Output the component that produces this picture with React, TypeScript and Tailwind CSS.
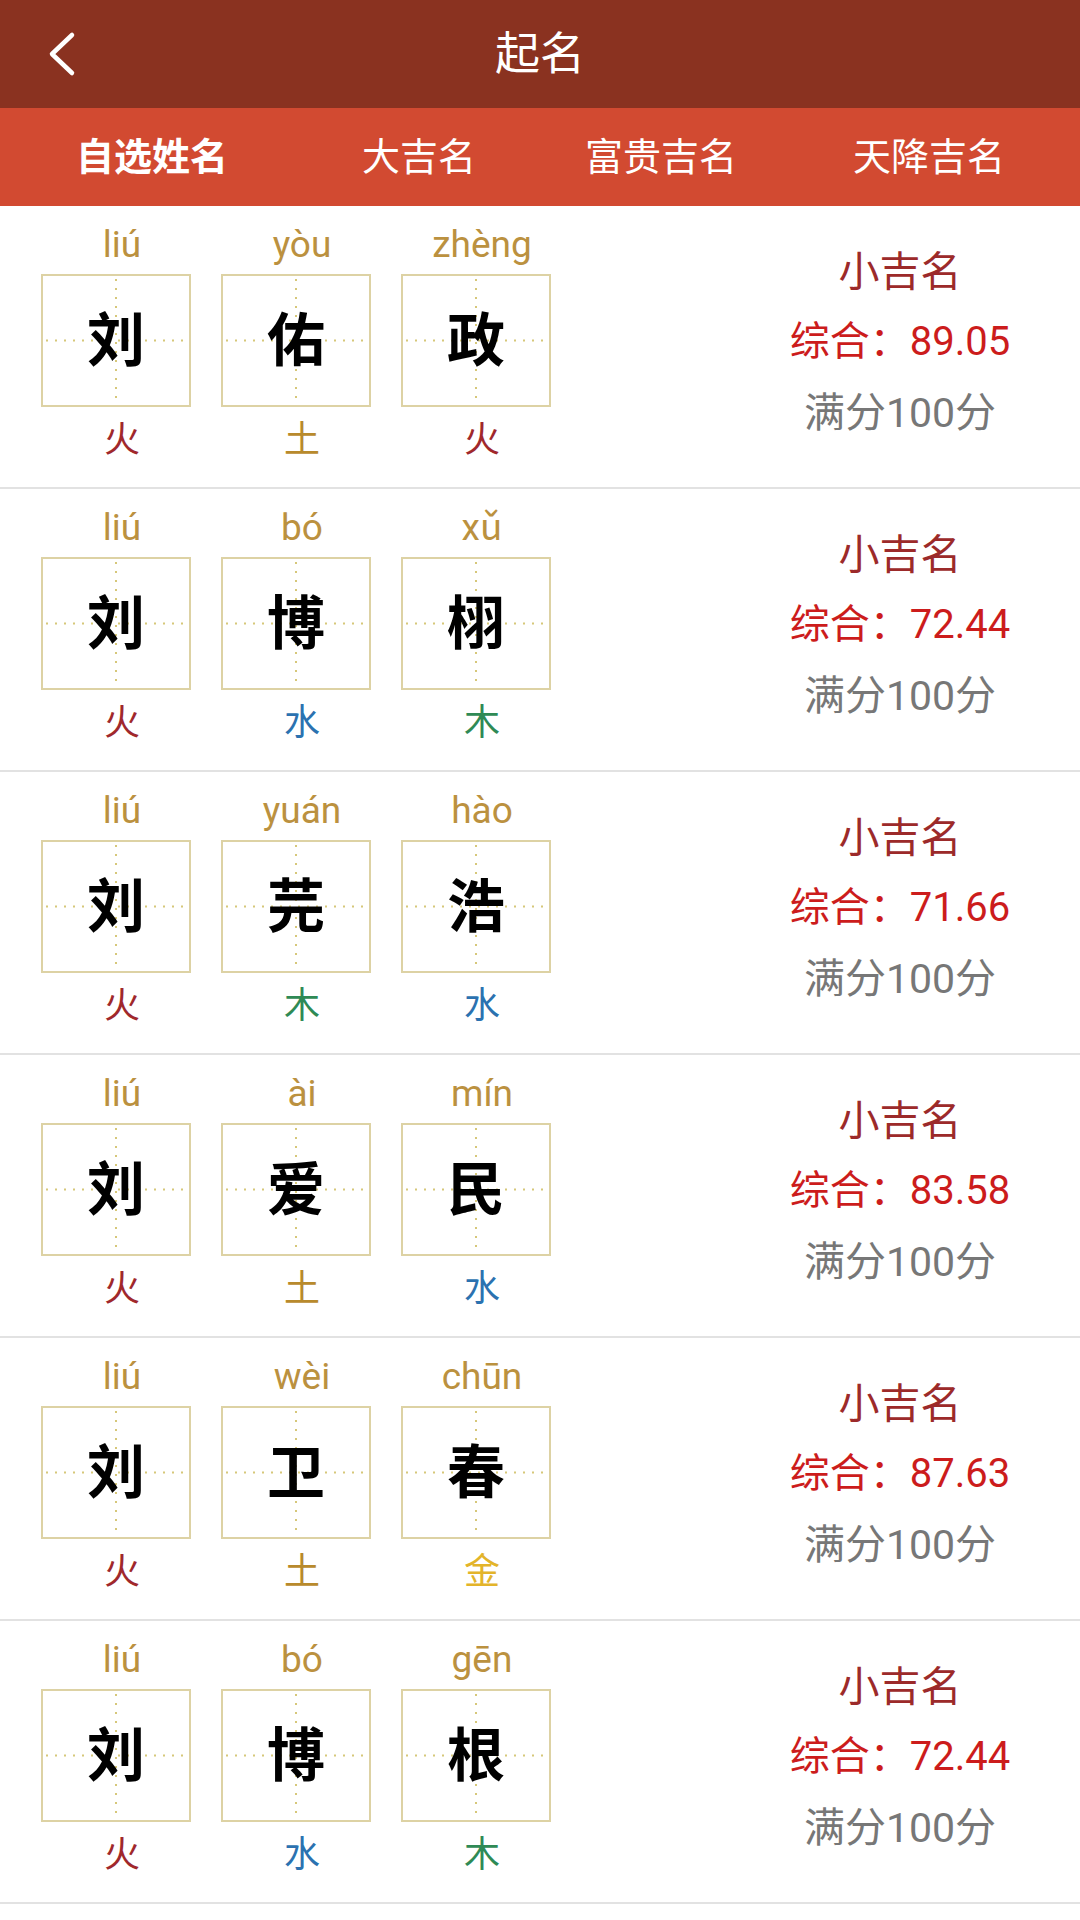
const tabs = [
  { label: '自选姓名', active: true, gap: 'ml-0' },
  { label: '大吉名', active: false, gap: 'ml-[134px]' },
  { label: '富贵吉名', active: false, gap: 'ml-[109px]' },
  { label: '天降吉名', active: false, gap: 'ml-[116px]' },
]

const elementColor: Record<string, string> = {
  火: 'text-[#a0282c]',
  土: 'text-[#b88a2c]',
  水: 'text-[#2b72b0]',
  木: 'text-[#2f8a55]',
  金: 'text-[#e3b42a]',
}

const names = [
  { chars: [['liú', '刘', '火'], ['yòu', '佑', '土'], ['zhèng', '政', '火']], score: '89.05' },
  { chars: [['liú', '刘', '火'], ['bó', '博', '水'], ['xǔ', '栩', '木']], score: '72.44' },
  { chars: [['liú', '刘', '火'], ['yuán', '芫', '木'], ['hào', '浩', '水']], score: '71.66' },
  { chars: [['liú', '刘', '火'], ['ài', '爱', '土'], ['mín', '民', '水']], score: '83.58' },
  { chars: [['liú', '刘', '火'], ['wèi', '卫', '土'], ['chūn', '春', '金']], score: '87.63' },
  { chars: [['liú', '刘', '火'], ['bó', '博', '水'], ['gēn', '根', '木']], score: '72.44' },
]

const font = { fontFamily: 'Roboto, "Noto Sans CJK SC", sans-serif' }

function GridLines() {
  return (
    <svg className="absolute inset-0" width="146" height="129" viewBox="0 0 146 129">
      <line x1="73" y1="3" x2="73" y2="126" stroke="#d6c779" strokeWidth="2" strokeDasharray="2 7" />
      <line x1="3" y1="64.5" x2="143" y2="64.5" stroke="#d6c779" strokeWidth="2" strokeDasharray="2 7" />
    </svg>
  )
}

function CharCell({ pinyin, hanzi, element }: { pinyin: string; hanzi: string; element: string }) {
  return (
    <div className="flex w-[150px] flex-col items-center">
      <div className="h-[68px] pl-[12px] pt-[16px] text-[37px] leading-[46px] text-[#bb913f]">{pinyin}</div>
      <div className="relative flex h-[133px] w-[150px] items-center justify-center border-2 border-[#ddd2a4]">
        <GridLines />
        <span className="relative text-[58px] font-bold leading-none text-black">{hanzi}</span>
      </div>
      <div className={`mt-[11px] pl-[12px] text-[36px] leading-[44px] ${elementColor[element]}`}>{element}</div>
    </div>
  )
}

export default function App() {
  return (
    <div className="min-h-[1920px] w-[1080px] bg-white" style={font}>
      <header className="relative flex h-[108px] items-center justify-center bg-[#8a3220]">
        <svg className="absolute left-[44px] top-[30px]" width="36" height="48" viewBox="0 0 36 48">
          <polyline points="28,5 8,24 28,43" fill="none" stroke="white" strokeWidth="4.5" strokeLinecap="round" strokeLinejoin="round" />
        </svg>
        <h1 className="text-[45px] leading-none text-white">起名</h1>
      </header>

      <nav className="flex h-[98px] items-center bg-[#d24a31] pl-[76px] text-[38px] text-white">
        {tabs.map((tab) => (
          <span key={tab.label} className={`${tab.gap} ${tab.active ? 'font-bold' : 'font-normal'}`}>
            {tab.label}
          </span>
        ))}
      </nav>

      <ul>
        {names.map((item, index) => (
          <li key={index} className="flex h-[283px] border-b-2 border-[#e2e2e2] pl-[41px]">
            <div className="flex gap-[30px]">
              {item.chars.map(([pinyin, hanzi, element], i) => (
                <CharCell key={i} pinyin={pinyin} hanzi={hanzi} element={element} />
              ))}
            </div>
            <div className="ml-auto flex w-[360px] flex-col items-center pt-[40px]">
              <p className="text-[41px] leading-[52px] text-[#9c2a2a]">小吉名</p>
              <p className="mt-[18px] text-[40px] leading-[52px] text-[#cc1c1c]">综合：{item.score}</p>
              <p className="mt-[19px] text-[41px] leading-[52px] text-[#777777]">满分100分</p>
            </div>
          </li>
        ))}
      </ul>
    </div>
  )
}
